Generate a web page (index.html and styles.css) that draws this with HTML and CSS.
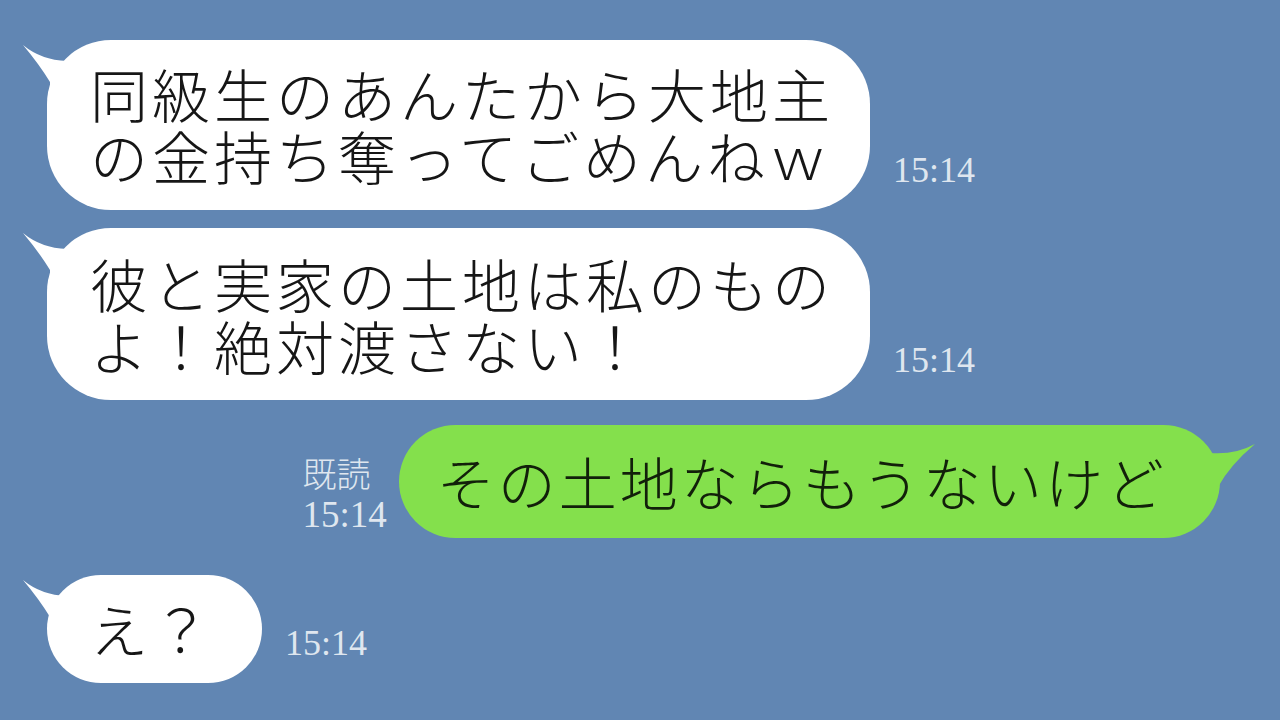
FILE: index.html
```html
<!DOCTYPE html>
<html lang="ja">
<head>
<meta charset="utf-8">
<title>chat</title>
<link rel="stylesheet" href="styles.css">
</head>
<body>
<div class="chat">
  <div class="row left first">
    <div class="bubble white">
      <svg class="tail tail-l" viewBox="0 0 60 60" width="60" height="60"><path d="M2,5 Q20,20 46,21 L60,60 L29,60 L29,42 Q18,24 2,5 Z"/></svg>
      <p class="msg">同級生のあんたから大地主<br>の金持ち奪ってごめんねｗ</p>
    </div>
    <span class="time">15:14</span>
  </div>
  <div class="row left second">
    <div class="bubble white">
      <svg class="tail tail-l" viewBox="0 0 60 60" width="60" height="60"><path d="M2,5 Q20,20 46,21 L60,60 L29,60 L29,42 Q18,24 2,5 Z"/></svg>
      <p class="msg">彼と実家の土地は私のもの<br>よ！絶対渡さない！</p>
    </div>
    <span class="time">15:14</span>
  </div>
  <div class="row right third">
    <div class="receipt">
      <span class="read">既読</span>
      <span class="time-r">15:14</span>
    </div>
    <div class="bubble green">
      <svg class="tail tail-r" viewBox="0 0 60 70" width="60" height="70"><path d="M55,19 Q35,30 10,28 L0,50 L18,62 Q30,40 55,19 Z"/></svg>
      <p class="msg">その土地ならもうないけど</p>
    </div>
  </div>
  <div class="row left fourth">
    <div class="bubble white small">
      <svg class="tail tail-l" viewBox="0 0 60 60" width="60" height="60"><path d="M2,5 Q20,20 46,21 L60,60 L29,60 L29,42 Q18,24 2,5 Z"/></svg>
      <p class="msg">え？</p>
    </div>
    <span class="time">15:14</span>
  </div>
</div>
</body>
</html>
```
FILE: styles.css
```css
html, body {
  margin: 0;
  padding: 0;
}
body {
  width: 1280px;
  height: 720px;
  overflow: hidden;
  background: #6186b3;
  font-family: "Noto Sans CJK JP", "Noto Sans", sans-serif;
}
.chat {
  display: flex;
  flex-direction: column;
  padding-top: 40px;
}
.row {
  display: flex;
  align-items: flex-end;
}
.row.left {
  padding-left: 47px;
}
.row.right {
  justify-content: flex-end;
  padding-right: 60px;
}
.row.second { margin-top: 18px; }
.row.third { margin-top: 25px; }
.row.fourth { margin-top: 37px; }

.bubble {
  position: relative;
  border-radius: 64px;
  padding: 22px 36px 24px 43px;
}
.bubble.white { background: #ffffff; }
.bubble.green { background: #84e04c; padding: 25px 53px 26px 38px; }
.bubble.small { padding-right: 48px; }
.row.second .bubble { padding-top: 24px; padding-bottom: 24px; }

.msg {
  margin: 0;
  font-size: 58px;
  line-height: 62px;
  letter-spacing: 4px;
  font-weight: 300;
  color: #161616;
  white-space: nowrap;
}
.green .msg {
  letter-spacing: 3px;
  color: #12200a;
}
.tail {
  position: absolute;
  top: 0;
  overflow: visible;
}
.tail-l { left: -26px; fill: #ffffff; }
.tail-r { right: -40px; fill: #84e04c; }

.time {
  margin-left: 23px;
  margin-bottom: 22px;
  font-family: "Liberation Serif", serif;
  font-size: 36px;
  line-height: 36px;
  color: #dfe6ef;
}
.receipt {
  display: flex;
  flex-direction: column;
  align-items: flex-start;
  margin-right: 12px;
  margin-bottom: 5px;
  color: #dfe6ef;
}
.read {
  font-size: 34px;
  line-height: 40px;
  font-weight: 300;
  margin-bottom: 4px;
}
.time-r {
  font-family: "Liberation Serif", serif;
  font-size: 37px;
  line-height: 36px;
}
```
